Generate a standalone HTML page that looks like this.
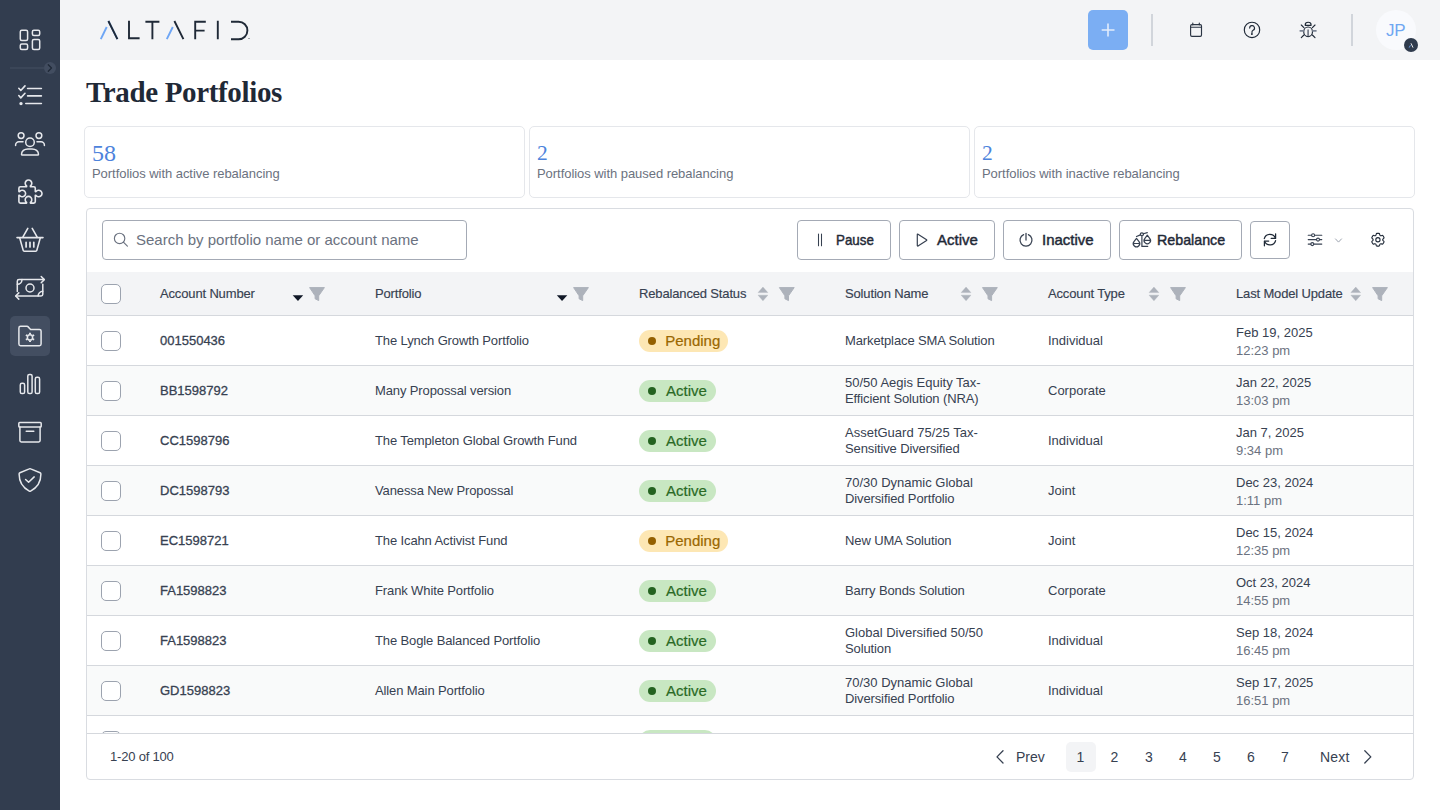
<!DOCTYPE html>
<html><head><meta charset="utf-8">
<style>
*{box-sizing:border-box;margin:0;padding:0}
html,body{width:1440px;height:810px;overflow:hidden;background:#fff;font-family:"Liberation Sans",sans-serif;color:#374151;-webkit-font-smoothing:antialiased}
.abs{position:absolute}
#side{position:absolute;left:0;top:0;width:60px;height:810px;background:#323d4f}
#hdr{position:absolute;left:60px;top:0;width:1380px;height:60px;background:#f3f4f6}
.t{position:absolute;white-space:nowrap;line-height:1}
svg{position:absolute;overflow:visible}
.card{border:1px solid #e5e7eb;border-radius:5px;background:#fff}
.stat{font-family:"Liberation Serif",serif;font-size:24px;color:#4d83dc}
.statl{font-size:13px;color:#6b7280;letter-spacing:-0.05px}
.tcard{border:1px solid #d9dce1;border-radius:4px;background:#fff}
.sbox{border:1px solid #a4aab5;border-radius:4px;background:#fff}
.btn{border:1px solid #a4aab5;border-radius:4px;background:#fff}
.btxt{font-size:15px;color:#1f2937;-webkit-text-stroke:0.45px #1f2937;transform-origin:0 0}
.cb{width:20px;height:20px;border:1px solid #9ca3af;border-radius:5px;background:#fff}
.th{font-size:13px;color:#374151;-webkit-text-stroke:0.15px #374151;letter-spacing:-0.15px}
.td{font-size:13px;color:#374151}
.acc{-webkit-text-stroke:0.3px #374151}
.tm{color:#6b7280}
.ls{letter-spacing:-0.12px}
.badge{height:22px;border-radius:11px;font-size:15px;line-height:22px;padding-left:27px;white-space:nowrap;-webkit-text-stroke:0.2px currentColor}
.badge i{position:absolute;left:9px;top:7px;width:8px;height:8px;border-radius:50%}
.bp{background:#fde7b4;color:#9a6700;padding-left:26.2px}
.bp i{background:#946000}
.ba{background:#c8e7c2;color:#2a6a25}
.ba i{background:#246320}
.pg{font-size:14px;color:#374151}
</style></head><body>
<div id="side">
<div class="abs" style="left:10px;top:316px;width:40px;height:40px;border-radius:5px;background:#434e61"></div>
<div class="abs" style="left:10px;top:67px;width:34px;height:2px;background:#3b4658"></div>
<div class="abs" style="left:44px;top:62px;width:12px;height:12px;border-radius:50%;background:#424d60"></div>
<svg style="left:0;top:0" width="60" height="500" viewBox="0 0 60 500" fill="none" stroke="currentColor" stroke-linecap="round" stroke-linejoin="round" color="#e6e8ec">
<path d="M48.3 64.8l3.2 3.2-3.2 3.2" stroke="#1f2937" stroke-width="1.3"/>
<g stroke-width="1.5"><rect x="20.3" y="30.3" width="7.3" height="10.1" rx="1.5"/><rect x="32.4" y="30.3" width="7.3" height="5.3" rx="1.5"/><rect x="20.3" y="43.9" width="7.3" height="5.5" rx="1.5"/><rect x="32.4" y="39.6" width="7.3" height="9.8" rx="1.5"/></g>
<g stroke-width="1.6"><path d="M18.8 88.3l2 2.2 4.2-4.6M18.8 95.6l2 2.3 4.2-4.6"/><path d="M27.6 88.5h13.8M27.6 95.9h13.8M25.8 103.5h15.6"/><circle cx="21" cy="103.6" r="0.9" fill="#e6e8ec"/></g>
<g stroke-width="1.5"><circle cx="21.1" cy="135.6" r="2.9"/><circle cx="38.9" cy="135.6" r="2.9"/><circle cx="30" cy="142.2" r="4.3"/><path d="M15.6 145.6v-.6c0-1.8 1.5-3.3 3.3-3.3h4.1M44.4 145.6v-.6c0-1.8-1.5-3.3-3.3-3.3h-4.1"/><path d="M21.5 154.2c0-3 2.9-5.3 6.4-5.3h4.2c3.5 0 6.4 2.3 6.4 5.3c0 .5-.3.8-.8.8H22.3c-.5 0-.8-.3-.8-.8z"/></g>
<g stroke-width="1.6"><path d="M20.4 186.7H26.6V186A3.3 3.3 0 1 1 30.4 186V186.7H33.8A1.5 1.5 0 0 1 35.3 188.2V191.6H36A3.3 3.3 0 1 1 36 195.4H35.3V201.6A1.5 1.5 0 0 1 33.8 203.1H30.4V202.4A3.3 3.3 0 1 0 26.6 202.4V203.1H20.4A1.5 1.5 0 0 1 18.9 201.6V195.4H19.6A3.3 3.3 0 1 0 19.6 191.6H18.9V188.2A1.5 1.5 0 0 1 20.4 186.7Z"/></g>
<g stroke-width="1.6"><path d="M27.8 228.4l-5 8.8M32.2 228.4l5 8.8M17 237.6h26"/><path d="M19.7 237.9l3.5 12.5c.1.5.6.8 1.1.8h11.4c.5 0 1-.3 1.1-.8l3.5-12.5"/><path d="M26.1 242.3v4.7M30 242.3v4.7M33.8 242.3v4.7" stroke-width="1.7"/></g>
<g stroke-width="1.5"><path d="M17.3 291.4V281.3c0-.9.8-1.7 1.7-1.7H44.1M42.8 284.3V294.3c0 .9-.8 1.7-1.7 1.7H15.9"/><path d="M41.2 276.5l3.1 3.1-3.1 3.1M18.8 292.9l-3.1 3.1 3.1 3.1"/><circle cx="30" cy="288" r="4"/><path d="M17.3 284.3A4.7 4.7 0 0 0 22 279.6M42.8 291.3A4.7 4.7 0 0 0 38.1 296"/></g>
<g stroke-width="1.5"><path d="M18.9 328c0-1 .8-1.7 1.7-1.7H27.2c.3 0 .5.1.7.3L30.6 329.4H39.4c1 0 1.7.8 1.7 1.7V344c0 1-.8 1.7-1.7 1.7H20.6c-1 0-1.7-.8-1.7-1.7z"/><circle cx="30" cy="337.4" r="2.6"/><path d="M30 334.2v-1.4M30 340.6v1.4M32.8 335.8l1.3-.75M27.2 335.8l-1.3-.75M27.2 339l-1.3.75M32.8 339l1.3.75" stroke-width="1.9" stroke-linecap="butt"/></g>
<g stroke-width="1.5"><rect x="20.3" y="383.3" width="4.3" height="10.3" rx="1.6"/><rect x="27.8" y="374.4" width="4.3" height="19.2" rx="1.6"/><rect x="35.3" y="377.3" width="4.3" height="16.3" rx="1.6"/></g>
<g stroke-width="1.5"><rect x="18.8" y="422.5" width="22.4" height="4.6" rx="0.9"/><path d="M19.9 427.1v13.4c0 .8.6 1.4 1.4 1.4h17.4c.8 0 1.4-.6 1.4-1.4v-13.4M26.2 431.3h7.6"/></g>
<g stroke-width="1.5"><path d="M29.3 468.9L19.9 472.8c-.5.2-.8.7-.8 1.2C19.1 482.2 23.5 488 29.3 491.1c.4.2.9.2 1.3 0C36.5 488 40.9 482.2 40.9 474c0-.5-.3-1-.8-1.2L30.7 468.9c-.4-.2-1-.2-1.4 0z"/><path d="M25.6 479.5l3 2.8 5.6-5.4"/></g>
</svg></div>
<div id="hdr"></div>
<svg style="left:0;top:0" width="260" height="60" viewBox="0 0 260 60" fill="none" stroke-width="1.9" stroke-linecap="butt">
<path d="M100.8 39.2L106.7 27" stroke="#6ea6f5"/>
<path d="M108.4 21L117.4 39.2M166.8 39.2L172.8 27" stroke="#6ea6f5"/>
<path d="M108.4 21L117.4 39.2M174.4 21L183.4 39.2M129 20.8V38.3h10.6M145.4 21.7h14M152.4 21.7V39.2M195.2 21.7h10.6M195.2 30.6h9.4M195.2 20.8V39.2M217.8 20.8V39.2M231 21.7h7.6a8.8 8.8 0 0 1 0 17.6H231" stroke="#1f2937"/>
<circle cx="249" cy="38.4" r="0.5" fill="#1f2937" stroke="none"/>
</svg>
<div class="abs" style="left:1088px;top:10px;width:40px;height:40px;border-radius:5px;background:#7baef3"></div>
<svg style="left:1088px;top:10px" width="40" height="40" viewBox="0 0 40 40"><path d="M13.7 20h12.8M20 13.6v12.8" stroke="#e3edfc" stroke-width="1.6"/></svg>
<div class="abs" style="left:1151px;top:14px;width:2px;height:32px;background:#d1d5db"></div>
<div class="abs" style="left:1351px;top:14px;width:2px;height:32px;background:#d1d5db"></div>
<svg style="left:1180px;top:15px" width="240" height="30" viewBox="1180 15 240 30" fill="none" stroke="currentColor" stroke-linecap="round" stroke-linejoin="round" color="#1f2937">
<g stroke-width="1.15" stroke="#2b3544"><rect x="1190.6" y="24.6" width="10.9" height="11.8" rx="1.3"/><path d="M1190.6 27.2h10.9M1192.8 23v1.8M1199.3 23v1.8"/></g>
<g stroke-width="1.15"><circle cx="1252" cy="29.9" r="7.7"/><path d="M1249.7 28.1a2.4 2.4 0 1 1 3.4 2.1c-.7.4-1.1.9-1.1 1.6v.6"/><circle cx="1251.9" cy="33.9" r=".4" fill="#1f2937"/></g>
<g stroke-width="1.15"><path d="M1305.2 25.3v-.4a2.95 2.6 0 0 1 5.9 0v.4z"/><ellipse cx="1308.1" cy="31.8" rx="4.4" ry="4.8"/><path d="M1308.1 30v5.6" stroke="#6b7280" stroke-width="1.6"/><path d="M1301.3 25l2.6 2.6M1315 25l-2.6 2.6M1301.3 37.6l2.6-2.6M1315 37.6l-2.6-2.6"/><path d="M1300.2 30.9h3.3M1312.7 30.9h3.3" stroke="#7b8494" stroke-width="1.6"/></g>
</svg>
<div class="abs" style="left:1376px;top:10px;width:40px;height:40px;border-radius:50%;background:#f9fafd"></div>
<div class="t" style="left:1386px;top:22px;font-size:17px;color:#6fa7f2;letter-spacing:-0.2px">JP</div>
<div class="abs" style="left:1404px;top:38px;width:14px;height:14px;border-radius:50%;background:#2f3b4d"></div>
<svg style="left:1404px;top:38px" width="14" height="14" viewBox="0 0 14 14" fill="none" stroke-width="0.9"><path d="M5.2 9.6L6.4 7.3" stroke="#6ea6f5"/><path d="M7 5.3L9 9.6" stroke="#fff"/></svg>
<div class="t" style="left:86px;top:78px;font-family:'Liberation Serif',serif;font-weight:bold;font-size:29px;letter-spacing:-0.35px;color:#1f2937">Trade Portfolios</div>
<div class="abs card" style="left:84px;top:126px;width:441px;height:72px"></div>
<div class="t stat" style="left:92px;top:141px">58</div>
<div class="t statl" style="left:92px;top:167px">Portfolios with active rebalancing</div>
<div class="abs card" style="left:529px;top:126px;width:441px;height:72px"></div>
<div class="t stat" style="left:537px;top:143px;font-size:21.5px">2</div>
<div class="t statl" style="left:537px;top:167px">Portfolios with paused rebalancing</div>
<div class="abs card" style="left:974px;top:126px;width:441px;height:72px"></div>
<div class="t stat" style="left:982px;top:143px;font-size:21.5px">2</div>
<div class="t statl" style="left:982px;top:167px">Portfolios with inactive rebalancing</div>
<div class="abs tcard" style="left:86px;top:208px;width:1328px;height:572px"></div>
<div class="abs sbox" style="left:102px;top:220px;width:365px;height:40px"></div>
<svg style="left:100px;top:220px" width="40" height="40" viewBox="100 220 40 40" fill="none" stroke="currentColor" stroke-linecap="round" stroke-linejoin="round" color="#6b7280"><g stroke-width="1.15"><circle cx="119.6" cy="238.4" r="5.2"/><path d="M123.4 242.2l4 4"/></g></svg>
<div class="t" style="left:136px;top:232px;font-size:15px;color:#6b7280">Search by portfolio name or account name</div>
<div class="abs btn" style="left:797px;top:220px;width:94px;height:40px"></div>
<div class="t btxt" style="left:836px;top:232px;transform:scaleX(0.89)">Pause</div>
<div class="abs btn" style="left:899px;top:220px;width:96px;height:40px"></div>
<div class="t btxt" style="left:937px;top:232px;transform:scaleX(1.0)">Active</div>
<div class="abs btn" style="left:1003px;top:220px;width:108px;height:40px"></div>
<div class="t btxt" style="left:1042px;top:232px;transform:scaleX(1.0)">Inactive</div>
<div class="abs btn" style="left:1119px;top:220px;width:123px;height:40px"></div>
<div class="t btxt" style="left:1157px;top:232px;transform:scaleX(0.95)">Rebalance</div>
<div class="abs btn" style="left:1250px;top:221px;width:40px;height:38px"></div>
<svg style="left:790px;top:220px" width="620" height="40" viewBox="790 220 620 40" fill="none" stroke="currentColor" stroke-linecap="round" stroke-linejoin="round" color="#1f2937">
<path d="M818.5 234v11.7M821.5 234v11.7" stroke-width="1.05" stroke="#374151"/>
<path d="M917.3 234.4v11.2c0 .4.4.6.7.4l8.6-5.5c.3-.2.3-.6 0-.8l-8.6-5.5c-.3-.2-.7 0-.7.2z" stroke-width="1.2" stroke="#374151"/>
<g stroke-width="1.25" stroke="#374151"><path d="M1026 233.4v6.6"/><path d="M1023.6 234.6A6 6 0 1 0 1028.4 234.6"/></g>
<g stroke-width="1.2" stroke="#374151"><path d="M1141.9 235.6v10.8h5.8M1136.5 236.5l3.9-1.6M1143.4 233.8l3.9-1.2"/><ellipse cx="1141.9" cy="234.2" rx="1.6" ry="1.3"/><path d="M1136.5 238.3l-2.55 3.4a3.2 3.2 0 1 0 5.1 0zM1147.3 235.2l-2.55 3.4a3.2 3.2 0 1 0 5.1 0zM1133.4 243.5h6.3M1144.2 240.4h6.3"/></g>
<g stroke-width="1.25"><path d="M1264.3 238.7A5.8 5.8 0 0 1 1275.3 238.1M1275.6 240.6A5.8 5.8 0 0 1 1264.6 241.3"/><path d="M1275.6 233.8v4.6h-4.4M1264.4 245.8v-4.7h4.3"/></g>
<g stroke-width="1.1" stroke="#374151"><path d="M1308.2 235.2h3.4M1314.6 235.2h7.2M1308.2 239.6h8.3M1319.5 239.6h2.3M1308.2 244.1h2.6M1313.8 244.1h8"/><circle cx="1313.1" cy="235.2" r="1.5"/><circle cx="1318" cy="239.6" r="1.5"/><circle cx="1312.3" cy="244.1" r="1.5"/></g>
<path d="M1335.5 238.9l3 3.2 3-3.2" stroke="#9ca3af" stroke-width="1"/>
<g transform="translate(1369.4 231.25) scale(0.71)" stroke-width="1.55"><path d="M9.594 3.94c.09-.542.56-.94 1.11-.94h2.593c.55 0 1.02.398 1.11.94l.213 1.281c.063.374.313.686.645.87.074.04.147.083.22.127.325.196.72.257 1.075.124l1.217-.456a1.125 1.125 0 0 1 1.37.49l1.296 2.247a1.125 1.125 0 0 1-.26 1.431l-1.003.827c-.293.241-.438.613-.43.992a7.723 7.723 0 0 1 0 .255c-.008.378.137.75.43.991l1.004.827c.424.35.534.955.26 1.43l-1.298 2.247a1.125 1.125 0 0 1-1.369.491l-1.217-.456c-.355-.133-.75-.072-1.076.124a6.47 6.47 0 0 1-.22.128c-.331.183-.581.495-.644.869l-.213 1.281c-.09.543-.56.94-1.11.94h-2.594c-.55 0-1.019-.398-1.11-.94l-.213-1.281c-.062-.374-.312-.686-.644-.87a6.52 6.52 0 0 1-.22-.127c-.325-.196-.72-.257-1.076-.124l-1.217.456a1.125 1.125 0 0 1-1.369-.49l-1.297-2.247a1.125 1.125 0 0 1 .26-1.431l1.004-.827c.292-.24.437-.613.43-.991a6.932 6.932 0 0 1 0-.255c.007-.38-.138-.751-.43-.992l-1.004-.827a1.125 1.125 0 0 1-.26-1.43l1.297-2.247a1.125 1.125 0 0 1 1.37-.491l1.216.456c.356.133.751.072 1.076-.124.072-.044.146-.086.22-.128.332-.183.582-.495.644-.869l.214-1.28Z"/><circle cx="12" cy="12" r="3"/></g>
</svg>
<div class="abs" style="left:87px;top:272px;width:1326px;height:43px;background:#f3f4f6"></div>
<div class="abs" style="left:87px;top:315px;width:1326px;height:1px;background:#d5d8dd"></div>
<div class="abs cb" style="left:101px;top:284px"></div>
<div class="t th" style="left:160px;top:287px">Account Number</div>
<div class="t th" style="left:375px;top:287px">Portfolio</div>
<div class="t th" style="left:639px;top:287px">Rebalanced Status</div>
<div class="t th" style="left:845px;top:287px">Solution Name</div>
<div class="t th" style="left:1048px;top:287px">Account Type</div>
<div class="t th" style="left:1236px;top:287px">Last Model Update</div>
<svg style="left:0;top:280px" width="1440" height="30" viewBox="0 280 1440 30">
<path d="M292.7 295.3h10.5l-5.25 5.8z" fill="#111827"/><path d="M309.6 287.6h14.8l-5.7 8.2v4.8l-3.6-1.8v-3z" fill="#adb2bb" stroke="#adb2bb" stroke-width="1" stroke-linejoin="round"/><path d="M556.8 295.3h10.5l-5.25 5.8z" fill="#111827"/><path d="M573.6 287.6h14.8l-5.7 8.2v4.8l-3.6-1.8v-3z" fill="#adb2bb" stroke="#adb2bb" stroke-width="1" stroke-linejoin="round"/>
<path d="M758.0999999999999 292.6l4.85-5.5 4.85 5.5zM758.0999999999999 295.2l4.85 5.6 4.85-5.6z" fill="#adb2bb" stroke="#adb2bb" stroke-width="0.4" stroke-linejoin="round"/><path d="M779.4 287.6h14.8l-5.7 8.2v4.8l-3.6-1.8v-3z" fill="#adb2bb" stroke="#adb2bb" stroke-width="1" stroke-linejoin="round"/><path d="M961.1999999999999 292.6l4.85-5.5 4.85 5.5zM961.1999999999999 295.2l4.85 5.6 4.85-5.6z" fill="#adb2bb" stroke="#adb2bb" stroke-width="0.4" stroke-linejoin="round"/><path d="M982.5 287.6h14.8l-5.7 8.2v4.8l-3.6-1.8v-3z" fill="#adb2bb" stroke="#adb2bb" stroke-width="1" stroke-linejoin="round"/><path d="M1149.1 292.6l4.85-5.5 4.85 5.5zM1149.1 295.2l4.85 5.6 4.85-5.6z" fill="#adb2bb" stroke="#adb2bb" stroke-width="0.4" stroke-linejoin="round"/><path d="M1170.6 287.6h14.8l-5.7 8.2v4.8l-3.6-1.8v-3z" fill="#adb2bb" stroke="#adb2bb" stroke-width="1" stroke-linejoin="round"/><path d="M1350.8999999999999 292.6l4.85-5.5 4.85 5.5zM1350.8999999999999 295.2l4.85 5.6 4.85-5.6z" fill="#adb2bb" stroke="#adb2bb" stroke-width="0.4" stroke-linejoin="round"/><path d="M1372.6 287.6h14.8l-5.7 8.2v4.8l-3.6-1.8v-3z" fill="#adb2bb" stroke="#adb2bb" stroke-width="1" stroke-linejoin="round"/>
</svg>
<div class="abs" style="left:87px;top:316px;width:1326px;height:49px;background:#ffffff"></div>
<div class="abs" style="left:87px;top:365px;width:1326px;height:1px;background:#d5d8dd"></div>
<div class="abs cb" style="left:101px;top:331px"></div>
<div class="t td acc" style="left:160px;top:334px">001550436</div>
<div class="t td" style="left:375px;top:334px;letter-spacing:-0.12px">The Lynch Growth Portfolio</div>
<div class="abs badge bp" style="left:639px;top:330px;width:89px"><i></i>Pending</div>
<div class="t td ls" style="left:845px;top:334px">Marketplace SMA Solution</div>
<div class="t td" style="left:1048px;top:334px">Individual</div>
<div class="t td" style="left:1236px;top:326px">Feb 19, 2025</div>
<div class="t td tm" style="left:1236px;top:344px">12:23 pm</div>
<div class="abs" style="left:87px;top:366px;width:1326px;height:49px;background:#f9fafa"></div>
<div class="abs" style="left:87px;top:415px;width:1326px;height:1px;background:#d5d8dd"></div>
<div class="abs cb" style="left:101px;top:381px"></div>
<div class="t td acc" style="left:160px;top:384px">BB1598792</div>
<div class="t td" style="left:375px;top:384px;letter-spacing:-0.12px">Many Propossal version</div>
<div class="abs badge ba" style="left:639px;top:380px;width:77px"><i></i>Active</div>
<div class="t td " style="left:845px;top:376px">50/50 Aegis Equity Tax-</div>
<div class="t td ls" style="left:845px;top:392px">Efficient Solution (NRA)</div>
<div class="t td" style="left:1048px;top:384px">Corporate</div>
<div class="t td" style="left:1236px;top:376px">Jan 22, 2025</div>
<div class="t td tm" style="left:1236px;top:394px">13:03 pm</div>
<div class="abs" style="left:87px;top:416px;width:1326px;height:49px;background:#ffffff"></div>
<div class="abs" style="left:87px;top:465px;width:1326px;height:1px;background:#d5d8dd"></div>
<div class="abs cb" style="left:101px;top:431px"></div>
<div class="t td acc" style="left:160px;top:434px">CC1598796</div>
<div class="t td" style="left:375px;top:434px;letter-spacing:-0.12px">The Templeton Global Growth Fund</div>
<div class="abs badge ba" style="left:639px;top:430px;width:77px"><i></i>Active</div>
<div class="t td " style="left:845px;top:426px">AssetGuard 75/25 Tax-</div>
<div class="t td ls" style="left:845px;top:442px">Sensitive Diversified</div>
<div class="t td" style="left:1048px;top:434px">Individual</div>
<div class="t td" style="left:1236px;top:426px">Jan 7, 2025</div>
<div class="t td tm" style="left:1236px;top:444px">9:34 pm</div>
<div class="abs" style="left:87px;top:466px;width:1326px;height:49px;background:#f9fafa"></div>
<div class="abs" style="left:87px;top:515px;width:1326px;height:1px;background:#d5d8dd"></div>
<div class="abs cb" style="left:101px;top:481px"></div>
<div class="t td acc" style="left:160px;top:484px">DC1598793</div>
<div class="t td" style="left:375px;top:484px;letter-spacing:-0.12px">Vanessa New Propossal</div>
<div class="abs badge ba" style="left:639px;top:480px;width:77px"><i></i>Active</div>
<div class="t td " style="left:845px;top:476px">70/30 Dynamic Global</div>
<div class="t td ls" style="left:845px;top:492px">Diversified Portfolio</div>
<div class="t td" style="left:1048px;top:484px">Joint</div>
<div class="t td" style="left:1236px;top:476px">Dec 23, 2024</div>
<div class="t td tm" style="left:1236px;top:494px">1:11 pm</div>
<div class="abs" style="left:87px;top:516px;width:1326px;height:49px;background:#ffffff"></div>
<div class="abs" style="left:87px;top:565px;width:1326px;height:1px;background:#d5d8dd"></div>
<div class="abs cb" style="left:101px;top:531px"></div>
<div class="t td acc" style="left:160px;top:534px">EC1598721</div>
<div class="t td" style="left:375px;top:534px;letter-spacing:-0.12px">The Icahn Activist Fund</div>
<div class="abs badge bp" style="left:639px;top:530px;width:89px"><i></i>Pending</div>
<div class="t td ls" style="left:845px;top:534px">New UMA Solution</div>
<div class="t td" style="left:1048px;top:534px">Joint</div>
<div class="t td" style="left:1236px;top:526px">Dec 15, 2024</div>
<div class="t td tm" style="left:1236px;top:544px">12:35 pm</div>
<div class="abs" style="left:87px;top:566px;width:1326px;height:49px;background:#f9fafa"></div>
<div class="abs" style="left:87px;top:615px;width:1326px;height:1px;background:#d5d8dd"></div>
<div class="abs cb" style="left:101px;top:581px"></div>
<div class="t td acc" style="left:160px;top:584px">FA1598823</div>
<div class="t td" style="left:375px;top:584px;letter-spacing:-0.12px">Frank White Portfolio</div>
<div class="abs badge ba" style="left:639px;top:580px;width:77px"><i></i>Active</div>
<div class="t td ls" style="left:845px;top:584px">Barry Bonds Solution</div>
<div class="t td" style="left:1048px;top:584px">Corporate</div>
<div class="t td" style="left:1236px;top:576px">Oct 23, 2024</div>
<div class="t td tm" style="left:1236px;top:594px">14:55 pm</div>
<div class="abs" style="left:87px;top:616px;width:1326px;height:49px;background:#ffffff"></div>
<div class="abs" style="left:87px;top:665px;width:1326px;height:1px;background:#d5d8dd"></div>
<div class="abs cb" style="left:101px;top:631px"></div>
<div class="t td acc" style="left:160px;top:634px">FA1598823</div>
<div class="t td" style="left:375px;top:634px;letter-spacing:-0.12px">The Bogle Balanced Portfolio</div>
<div class="abs badge ba" style="left:639px;top:630px;width:77px"><i></i>Active</div>
<div class="t td " style="left:845px;top:626px">Global Diversified 50/50</div>
<div class="t td ls" style="left:845px;top:642px">Solution</div>
<div class="t td" style="left:1048px;top:634px">Individual</div>
<div class="t td" style="left:1236px;top:626px">Sep 18, 2024</div>
<div class="t td tm" style="left:1236px;top:644px">16:45 pm</div>
<div class="abs" style="left:87px;top:666px;width:1326px;height:49px;background:#f9fafa"></div>
<div class="abs" style="left:87px;top:715px;width:1326px;height:1px;background:#d5d8dd"></div>
<div class="abs cb" style="left:101px;top:681px"></div>
<div class="t td acc" style="left:160px;top:684px">GD1598823</div>
<div class="t td" style="left:375px;top:684px;letter-spacing:-0.12px">Allen Main Portfolio</div>
<div class="abs badge ba" style="left:639px;top:680px;width:77px"><i></i>Active</div>
<div class="t td " style="left:845px;top:676px">70/30 Dynamic Global</div>
<div class="t td ls" style="left:845px;top:692px">Diversified Portfolio</div>
<div class="t td" style="left:1048px;top:684px">Individual</div>
<div class="t td" style="left:1236px;top:676px">Sep 17, 2025</div>
<div class="t td tm" style="left:1236px;top:694px">16:51 pm</div>
<div class="abs" style="left:87px;top:716px;width:1326px;height:17px;background:#fff;overflow:hidden"><div class="abs cb" style="left:14px;top:15px"></div><div class="abs badge ba" style="left:552px;top:14px;width:77px"></div></div>
<div class="abs" style="left:87px;top:733px;width:1326px;height:1px;background:#d5d8dd"></div>
<div class="t" style="left:110px;top:750px;font-size:13px;color:#374151;letter-spacing:-0.2px">1-20 of 100</div>
<div class="abs" style="left:1066px;top:742px;width:30px;height:30px;border-radius:5px;background:#f3f4f6"></div>
<div class="t pg" style="left:1016px;top:750px">Prev</div>
<div class="t pg" style="left:1320px;top:750px;letter-spacing:0.2px">Next</div>
<div class="t pg" style="left:1060.5px;width:40px;text-align:center;top:750px">1</div>
<div class="t pg" style="left:1094.5px;width:40px;text-align:center;top:750px">2</div>
<div class="t pg" style="left:1129px;width:40px;text-align:center;top:750px">3</div>
<div class="t pg" style="left:1163px;width:40px;text-align:center;top:750px">4</div>
<div class="t pg" style="left:1197px;width:40px;text-align:center;top:750px">5</div>
<div class="t pg" style="left:1231px;width:40px;text-align:center;top:750px">6</div>
<div class="t pg" style="left:1265px;width:40px;text-align:center;top:750px">7</div>
<svg style="left:990px;top:745px" width="390" height="25" viewBox="990 745 390 25" fill="none" stroke="currentColor" stroke-linecap="round" stroke-linejoin="round" color="#374151"><path d="M1003 750.8l-6 6.1 6 6.1M1364.8 750.8l6 6.1-6 6.1" stroke-width="1.3"/></svg>
</body></html>
